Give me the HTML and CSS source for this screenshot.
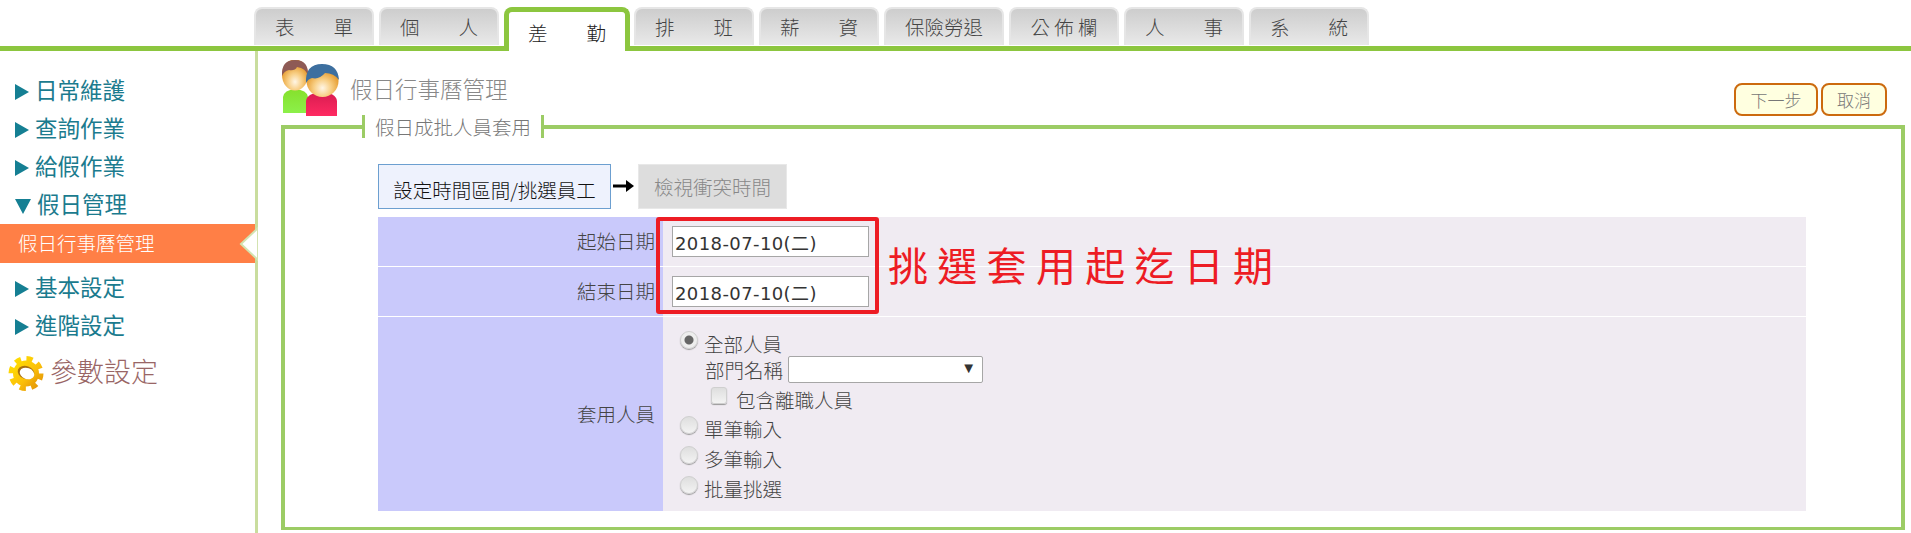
FILE: index.html
```html
<!DOCTYPE html>
<html lang="zh-Hant">
<head>
    <meta charset="UTF-8">
    <meta name="viewport" content="width=device-width, initial-scale=1.0">
    <title>假日行事曆管理</title>
    <link rel="stylesheet" href="styles.css">
</head>
<body>
    <!-- Top Tabs -->
    <nav class="tabs">
        <a class="tab">表　　單</a>
        <a class="tab">個　　人</a>
        <a class="tab active">差　　勤</a>
        <a class="tab">排　　班</a>
        <a class="tab">薪　　資</a>
        <a class="tab">保險勞退</a>
        <a class="tab tab-short">公 佈 欄</a>
        <a class="tab">人　　事</a>
        <a class="tab">系　　統</a>
    </nav>

    <div class="main">
        <!-- Side Menu -->
        <aside class="sidebar">
            <a class="menu-item"><span class="arrow"></span>日常維護</a>
            <a class="menu-item"><span class="arrow"></span>查詢作業</a>
            <a class="menu-item"><span class="arrow"></span>給假作業</a>
            <a class="menu-item"><span class="arrow open"></span>假日管理</a>
            <a class="menu-sub">
                假日行事曆管理
                <svg class="notch" width="19" height="34" viewBox="0 0 19 34">
                    <polygon points="19,1 2,17 19,33" fill="#fff" stroke="#d3e3b0" stroke-width="2"/>
                </svg>
            </a>
            <a class="menu-item"><span class="arrow"></span>基本設定</a>
            <a class="menu-item"><span class="arrow"></span>進階設定</a>
            <a class="menu-settings">
                <svg width="36" height="37" viewBox="0 0 36 36">
                    <defs>
                        <linearGradient id="gearFill" x1="0" y1="0" x2="1" y2="1">
                            <stop offset="0" stop-color="#ffe000"/>
                            <stop offset="0.6" stop-color="#fbbf0a"/>
                            <stop offset="1" stop-color="#e09008"/>
                        </linearGradient>
                    </defs>
                    <circle cx="18" cy="18" r="14.5" fill="none" stroke="url(#gearFill)" stroke-width="6" stroke-dasharray="6 5.39"/>
                    <circle cx="18" cy="18" r="13" fill="url(#gearFill)"/>
                    <ellipse cx="18" cy="17" rx="8.500" ry="6.500" fill="#a8700f" transform="rotate(20 18 17)"/>
                    <ellipse cx="19" cy="18" rx="7.500" ry="5.500" fill="#fff" transform="rotate(20 19 18)"/>
                </svg>
                <span class="settings-text">參數設定</span>
            </a>
        </aside>

        <!-- Page Content -->
        <section class="content">
            <div class="page-head">
                <svg class="people" width="58" height="58" viewBox="0 0 58 58">
                    <defs>
                        <radialGradient id="skin" cx="0.5" cy="0.72" r="0.6">
                            <stop offset="0" stop-color="#fff6e6"/>
                            <stop offset="0.45" stop-color="#f8cf85"/>
                            <stop offset="1" stop-color="#e2921f"/>
                        </radialGradient>
                        <linearGradient id="shirtGreen" x1="0" y1="0" x2="0" y2="1">
                            <stop offset="0" stop-color="#86e02c"/>
                            <stop offset="1" stop-color="#8cf04a"/>
                        </linearGradient>
                        <linearGradient id="shirtPink" x1="0" y1="0" x2="0" y2="1">
                            <stop offset="0" stop-color="#d81c50"/>
                            <stop offset="1" stop-color="#ff2a62"/>
                        </linearGradient>
                    </defs>
                    <path d="M2 53V37q1-7 12-8q12 1 13 8V53z" fill="url(#shirtGreen)"/>
                    <ellipse cx="14" cy="15" rx="13" ry="15.500" fill="url(#skin)"/>
                    <path d="M1 16Q0 0 14 0Q28 0 27 16Q25 8 16 7Q14 11 8 10Q3 11 1 16z" fill="#8e5a55"/>
                    <path d="M25 56V41q1-8 16-9q14 1 15 9V56z" fill="url(#shirtPink)"/>
                    <ellipse cx="41.500" cy="21" rx="16" ry="16" fill="url(#skin)"/>
                    <path d="M25 23Q24 4 41 4Q57 4 58 20Q53 13 44 13Q38 20 31 18Q27 19 25 23z" fill="#3d6f9f"/>
                </svg>
                <h1 class="page-title">假日行事曆管理</h1>
                <div class="head-buttons">
                    <button class="btn btn-next">下一步</button>
                    <button class="btn btn-cancel">取消</button>
                </div>
            </div>

            <fieldset class="panel">
                <legend>假日成批人員套用</legend>

                <div class="steps">
                    <div class="step current">設定時間區間/挑選員工</div>
                    <svg class="step-arrow" width="21" height="14" viewBox="0 0 21 14">
                        <path d="M0 7H16" stroke="#000" stroke-width="3"/>
                        <polygon points="13,1 21,7 13,13" fill="#000"/>
                    </svg>
                    <div class="step">檢視衝突時間</div>
                </div>

                <div class="form-table">
                    <div class="cell-label">起始日期</div>
                    <div class="cell-value"><input class="date-input" type="text" value="2018-07-10(二)"></div>
                    <div class="cell-label">結束日期</div>
                    <div class="cell-value"><input class="date-input" type="text" value="2018-07-10(二)"></div>
                    <div class="cell-label">套用人員</div>
                    <div class="cell-value people-cell">
                        <label class="option option-first"><input type="radio" name="who" checked>全部人員</label>
                        <div class="dept-row">
                            部門名稱
                            <div class="select-wrap">
                                <select class="dept-select"></select>
                                <span class="select-arrow">▼</span>
                            </div>
                        </div>
                        <label class="check-row"><input type="checkbox">包含離職人員</label>
                        <label class="option"><input type="radio" name="who">單筆輸入</label>
                        <label class="option"><input type="radio" name="who">多筆輸入</label>
                        <label class="option"><input type="radio" name="who">批量挑選</label>
                    </div>

                    <!-- Annotation drawn over the form -->
                    <div class="note-box"></div>
                    <div class="note-text">挑選套用起迄日期</div>
                </div>
            </fieldset>
        </section>
    </div>
</body>
</html>
```

FILE: styles.css
```css
/* General Styles */
* {
    box-sizing: border-box;
}

html, body {
    height: 100%;
}

body {
    margin: 0;
    height: 533px;
    overflow: hidden;
    background: #fff;
    color: #555;
    font-family: "Noto Sans CJK TC", "Liberation Sans", sans-serif;
    font-size: 19.5px;
    font-weight: 300;
}

/* Top Tabs */
.tabs {
    display: flex;
    align-items: flex-end;
    height: 51px;
    padding: 7px 0 0 254px;
    border-bottom: 5px solid #8cc63f;
}

.tab {
    display: flex;
    align-items: center;
    justify-content: center;
    width: 120px;
    height: 38px;
    margin: 0 5px 1px 0;
    border: 2px solid #e6e6e6;
    border-bottom: none;
    border-radius: 8px 8px 0 0;
    background: linear-gradient(#cdcdcd, #e9e9e9);
    color: #444;
    line-height: 1;
}

.tab-short {
    width: 110px;
}

.tab.active {
    width: 126px;
    height: 44px;
    margin: 0 4px -5px 0;
    border: 5px solid #8cc63f;
    border-bottom: none;
    background: #fff;
    color: #222;
    padding-top: 2px;
}

.main {
    display: flex;
    height: 482px;
}

/* Side Menu */
.sidebar {
    display: flex;
    flex-direction: column;
    flex: none;
    width: 258px;
    padding-top: 22px;
    border-right: 3px solid #c9dd9e;
}

.menu-item {
    display: flex;
    align-items: center;
    gap: 6px;
    height: 38px;
    padding: 0 0 6px 15px;
    color: #1b7b8e;
    font-size: 22.5px;
    font-weight: 400;
}

.arrow {
    width: 0;
    height: 0;
    margin-top: 6px;
    border-left: 14px solid #157f93;
    border-top: 8px solid transparent;
    border-bottom: 8px solid transparent;
}

.arrow.open {
    border-left: 8px solid transparent;
    border-right: 8px solid transparent;
    border-top: 15px solid #157f93;
    border-bottom: none;
}

.menu-sub {
    position: relative;
    display: flex;
    align-items: center;
    flex: none;
    height: 39px;
    margin: -1px 0 7px;
    padding: 0 0 2px 18px;
    background: #ff7f46;
    color: #fff;
}

.notch {
    position: absolute;
    right: -3px;
    top: 3px;
}

.menu-settings {
    display: flex;
    align-items: center;
    gap: 6px;
    height: 37px;
    margin-top: 9px;
    padding-left: 8px;
    color: #966;
    font-size: 27px;
}

.settings-text {
    margin-bottom: 5px;
    line-height: 30px;
}

/* Page Content */
.content {
    flex: 1;
    min-width: 0;
    padding: 0 6px 0 23px;
}

.page-head {
    display: flex;
    align-items: flex-start;
    height: 64px;
    padding-top: 9px;
}

.people {
    flex: none;
    position: relative;
    z-index: 1;
}

.page-title {
    margin: 13px 0 0 11px;
    color: #888;
    font-size: 22.5px;
    font-weight: 300;
    line-height: 30px;
}

.head-buttons {
    display: flex;
    gap: 3px;
    margin: 23px 18px 0 auto;
}

.btn {
    height: 33px;
    padding: 0;
    border: 2px solid #cc6a0e;
    border-radius: 8px;
    background: #ffffe0;
    color: #777;
    font-family: inherit;
    font-size: 17px;
    font-weight: 300;
    line-height: 1;
}

.btn-next {
    width: 84px;
}

.btn-cancel {
    width: 66px;
}

.panel {
    margin: 0;
    padding: 26px 0 0 93px;
    height: 415px;
    border: 4px solid #9ccc65;
    border-bottom-width: 3px;
    min-width: 0;
}

.panel legend {
    height: 23px;
    margin-left: -16px;
    padding: 0 10px;
    border-left: 3px solid #9ccc65;
    border-right: 3px solid #9ccc65;
    color: #777;
    font-size: 19.5px;
    line-height: 23px;
}

.steps {
    display: flex;
    align-items: center;
    height: 45px;
    margin-bottom: 8px;
}

.step {
    display: flex;
    align-items: center;
    justify-content: center;
    height: 45px;
    padding: 0 15px;
    background: #ddd;
    border: 1px solid #e8e8e8;
    color: #888;
}

.step.current {
    width: 233px;
    padding: 6px 0 0;
    border: 1px solid #6c9fd0;
    background: #eef2fd;
    color: #111;
}

.step-arrow {
    margin: 0 4px 2px 2px;
}

/* Form Table */
.form-table {
    position: relative;
    display: grid;
    grid-template-columns: 285px 1143px;
    grid-template-rows: 49px 49px 194px;
    row-gap: 1px;
    width: 1428px;
}

.cell-label {
    display: flex;
    align-items: center;
    justify-content: flex-end;
    padding: 0 8px 2px 0;
    background: #c9c9fb;
    color: #444;
}

.cell-value {
    display: flex;
    align-items: center;
    padding-left: 9px;
    background: #f0ebf2;
}

.date-input {
    width: 197px;
    height: 31px;
    padding: 0 2px;
    border: 1px solid #a6a6a6;
    background: #fff;
    color: #333;
    font-family: "DejaVu Sans", "Noto Sans CJK TC", sans-serif;
    font-size: 18px;
    letter-spacing: 0.4px;
    outline: none;
}

.people-cell {
    flex-direction: column;
    align-items: flex-start;
    padding: 14px 0 0 17px;
    color: #444;
}

.option {
    display: flex;
    align-items: flex-start;
    height: 30px;
    line-height: 30px;
    padding-top: 1px;
}

.option-first {
    height: 25px;
    line-height: 26px;
    padding-top: 0;
}

.option input,
.check-row input {
    appearance: none;
    flex: none;
    margin: 0;
    background: linear-gradient(#dedede, #f3f3f3);
    box-shadow: 0 1px 1px #999;
    border: 1px solid #cfcfcf;
}

.option input {
    width: 18px;
    height: 18px;
    margin: 2px 6px 0 0;
    border-radius: 50%;
}

.option-first input {
    margin-top: 0;
}

.option input:checked {
    background: radial-gradient(circle, #666 0 4px, #eee 5px);
}

.dept-row {
    display: flex;
    align-items: center;
    height: 27px;
    margin-left: 25px;
    padding-bottom: 1px;
    gap: 5px;
}

.select-wrap {
    position: relative;
    width: 195px;
    height: 27px;
}

.dept-select {
    appearance: none;
    display: block;
    width: 100%;
    height: 100%;
    border: 1px solid #a6a6a6;
    border-radius: 2px;
    background: #fff;
}

.select-arrow {
    position: absolute;
    right: 7px;
    top: 3px;
    color: #333;
    font-family: "DejaVu Sans", sans-serif;
    font-size: 15px;
}

.check-row {
    display: flex;
    align-items: flex-start;
    height: 30px;
    margin-left: 31px;
    line-height: 34px;
}

.check-row input {
    width: 16px;
    height: 17px;
    margin: 4px 9px 0 0;
    border-radius: 3px;
}

/* Red annotation */
.note-box {
    position: absolute;
    left: 278px;
    top: 0;
    width: 223px;
    height: 97px;
    border: 4px solid #ed1c24;
    border-radius: 3px;
}

.note-text {
    position: absolute;
    left: 510px;
    top: 21px;
    color: #ed1c24;
    font-size: 40px;
    font-weight: 400;
    line-height: 52px;
    letter-spacing: 9.3px;
    white-space: nowrap;
}
```
